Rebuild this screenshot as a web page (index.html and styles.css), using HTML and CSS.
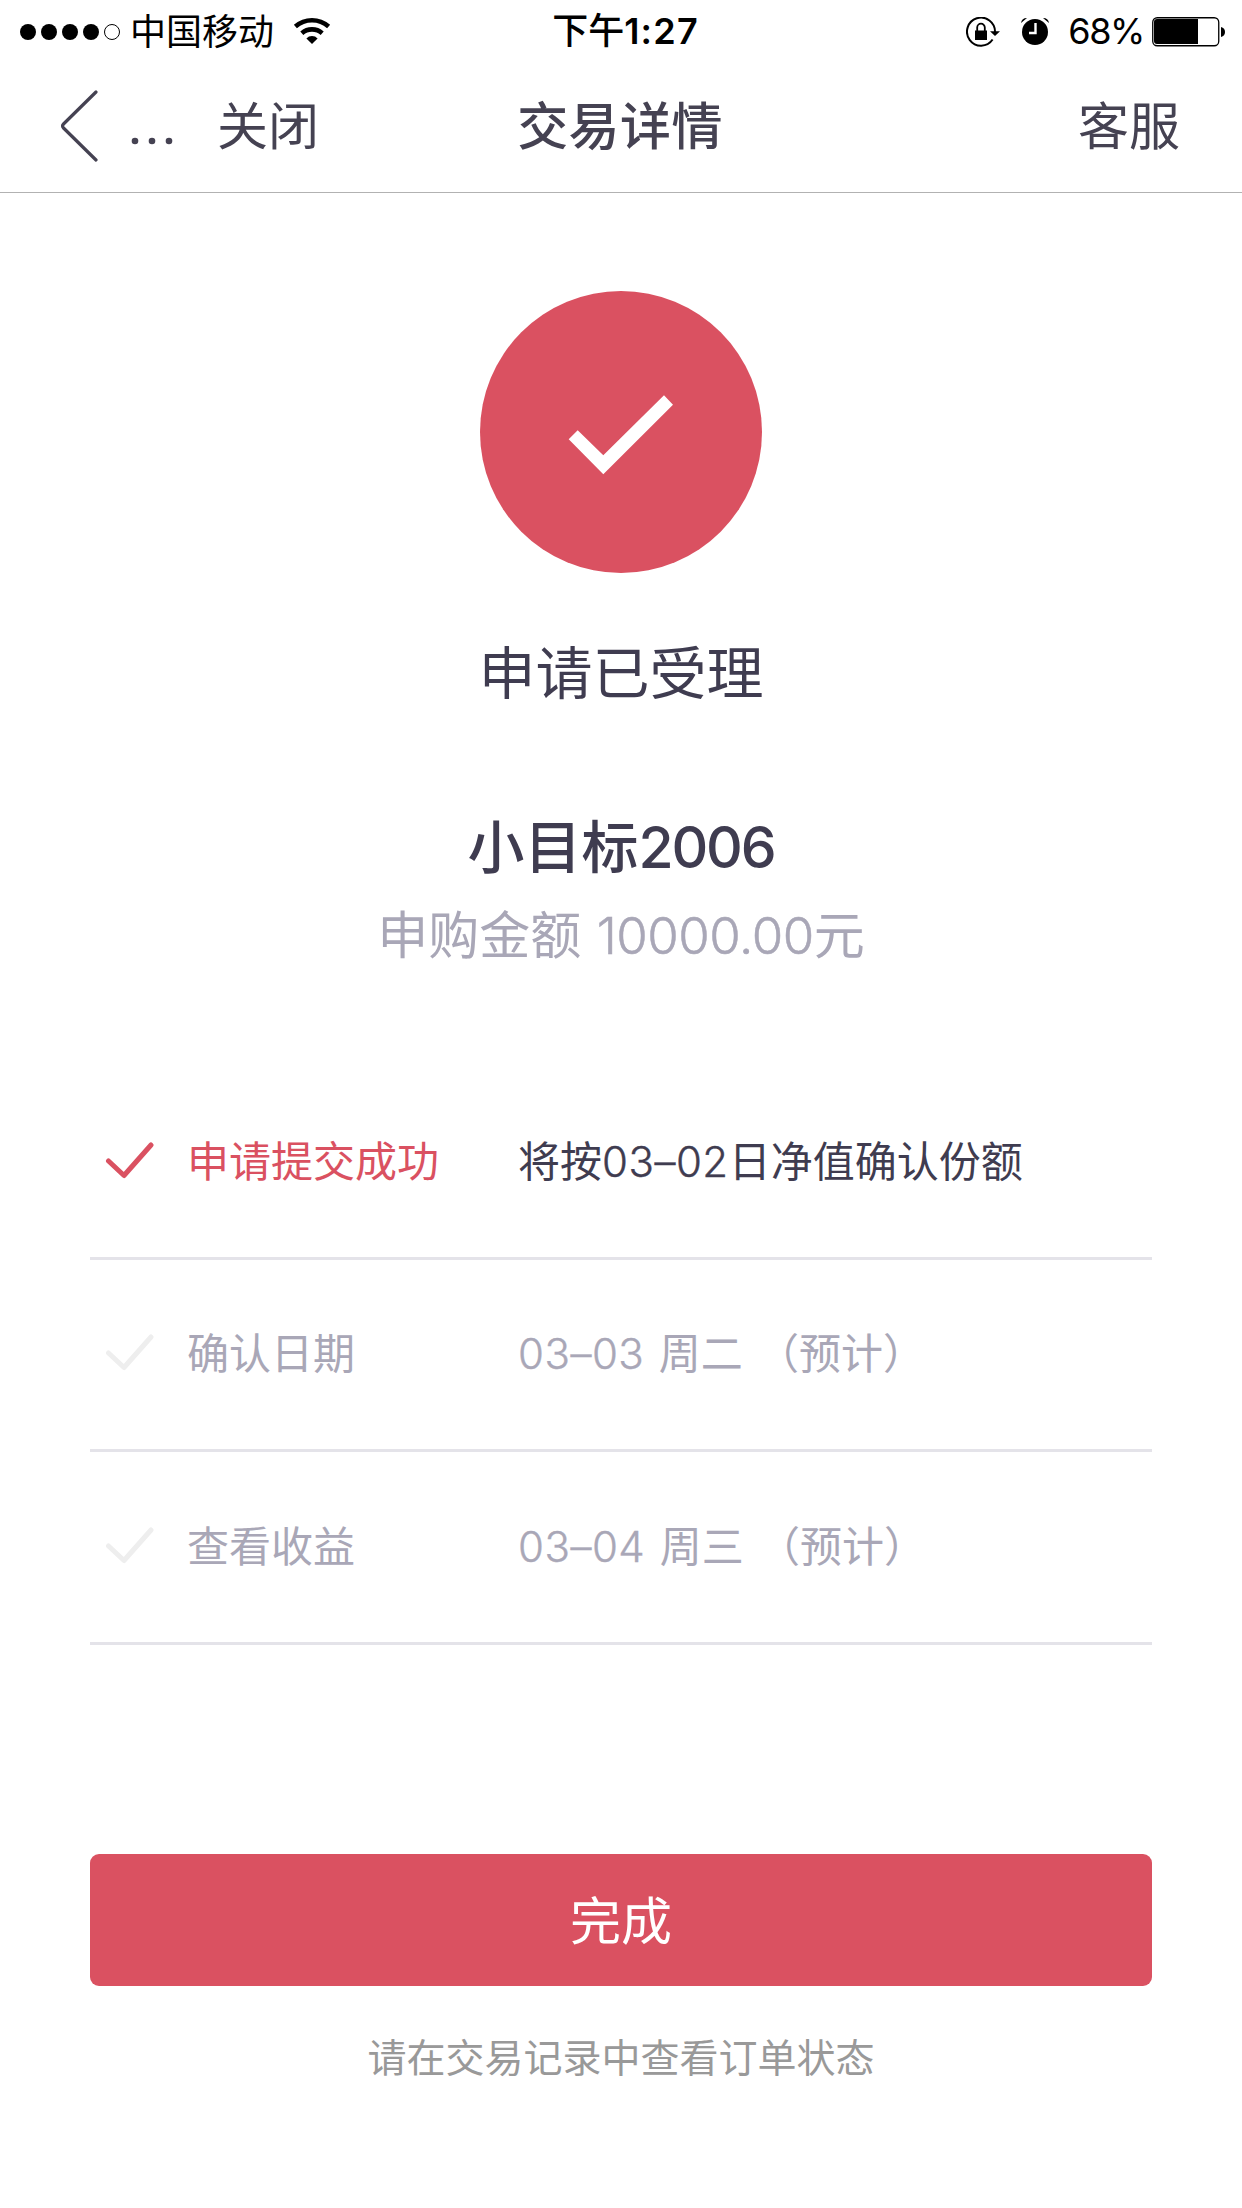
FILE: index.html
```html
<!DOCTYPE html>
<html lang="zh-CN">
<head>
<meta charset="utf-8">
<title>交易详情</title>
<link rel="stylesheet" href="styles.css">
</head>
<body>
<header class="status">
  <div class="status-left">
    <svg class="signal" width="100" height="18" viewBox="0 0 100 18">
      <circle cx="8" cy="9" r="8"/><circle cx="29" cy="9" r="8"/><circle cx="50" cy="9" r="8"/><circle cx="71" cy="9" r="8"/>
      <circle cx="92" cy="9" r="7.5" fill="none" stroke="#000" stroke-width="1"/>
    </svg>
    <span class="carrier">中国移动</span>
    <svg class="wifi" width="38" height="28" viewBox="0 0 38 28">
      <g fill="none" stroke="#000" stroke-width="4.600"><path d="M2.400 9.500a25 25 0 0 1 33.200 0"/><path d="M8.800 16.200a15.500 15.500 0 0 1 20.400 0"/></g>
      <path d="M19 27l-5.600-5.600a8 8 0 0 1 11.200 0z"/>
    </svg>
  </div>
  <div class="time">下午<span class="clock">1:27</span></div>
  <div class="status-right">
    <svg class="rotation" width="34" height="30" viewBox="0 0 34 30">
      <path d="M26.600 22.500A14 14 0 1 1 29 15" fill="none" stroke="#000" stroke-width="2"/>
      <path d="M24 14.200h10l-5 4.800z"/>
      <rect x="9" y="13.500" width="12" height="9.500"/>
      <path d="M11.200 14v-3.500a3.800 3.800 0 0 1 7.600 0V14" fill="none" stroke="#000" stroke-width="1.800"/>
    </svg>
    <svg class="alarm" width="28" height="28" viewBox="0 0 28 28">
      <circle cx="14" cy="15" r="13"/>
      <path d="M0 6a6 6 0 0 1 6-5zM28 6a6 6 0 0 0-6-5z"/>
      <path d="M14.500 6v10H8" fill="none" stroke="#fff" stroke-width="2.400"/>
    </svg>
    <span class="percent">68%</span>
    <svg class="battery" width="74" height="30" viewBox="0 0 74 30">
      <rect x=".75" y=".75" width="66" height="28" rx="4.500" fill="none" stroke="#000" stroke-width="1.300"/>
      <path d="M5 2h41v25H5a3 3 0 0 1-3-3V5a3 3 0 0 1 3-3z"/>
      <path d="M69 10q4 1 4 5t-4 5z"/>
    </svg>
  </div>
</header>
<nav class="nav">
  <div class="nav-left">
    <svg class="back" width="38" height="74" viewBox="0 0 38 74"><path d="M36 3L3.500 35q-2 2 0 4L36 71" fill="none" stroke="#454252" stroke-width="3.200" stroke-linecap="round"/></svg>
    <svg class="dots" width="42" height="8" viewBox="0 0 42 8"><circle cx="4" cy="4" r="3.300"/><circle cx="21" cy="4" r="3.300"/><circle cx="38" cy="4" r="3.300"/></svg>
    <span class="nav-text">关闭</span>
  </div>
  <h1 class="nav-title nav-text">交易详情</h1>
  <div class="nav-right nav-text">客服</div>
</nav>
<main class="content">
  <section class="result">
    <svg class="badge" width="282" height="282" viewBox="0 0 282 282">
      <circle cx="141" cy="141" r="141" fill="#da5161"/>
      <path d="M88.700 148.300l9-9 25.600 25 60.700-60 9 9.400-69.700 69.600z" fill="#fff"/>
    </svg>
    <p class="accepted">申请已受理</p>
    <h2 class="product">小目标<span class="product-num">2006</span></h2>
    <p class="amount">申购金额 <span class="amount-num">10000.00</span>元</p>
  </section>
  <ul class="steps">
    <li class="step done">
      <svg class="check" width="50" height="40" viewBox="0 0 50 40"><path d="M3.500 20L19 34.500 46 4"/></svg>
      <span class="label">申请提交成功</span><span class="value">将按<span class="date">03–02</span>日净值确认份额</span>
    </li>
    <li class="step">
      <svg class="check" width="50" height="40" viewBox="0 0 50 40"><path d="M3.500 20L19 34.500 46 4"/></svg>
      <span class="label">确认日期</span><span class="value"><span class="date">03–03</span> 周二 （预计）</span>
    </li>
    <li class="step">
      <svg class="check" width="50" height="40" viewBox="0 0 50 40"><path d="M3.500 20L19 34.500 46 4"/></svg>
      <span class="label">查看收益</span><span class="value"><span class="date">03–04</span> 周三 （预计）</span>
    </li>
  </ul>
  <button class="finish" type="button">完成</button>
  <p class="note">请在交易记录中查看订单状态</p>
</main>
</body>
</html>
```
FILE: styles.css
```css
* { box-sizing: border-box; margin: 0; padding: 0; }
body {
  width: 1242px;
  min-height: 2208px;
  background: #fff;
  color: #3f3c50;
  font-family: "Noto Sans CJK SC", sans-serif;
  font-weight: 400;
  white-space: nowrap;
}
svg { display: block; flex: none; }

.status, .nav { display: grid; grid-template-columns: 1fr auto 1fr; align-items: center; }
.status { height: 60px; padding: 0 16px 0 20px; color: #000; font-size: 36px; line-height: 60px; }
.status-left, .status-right { display: flex; align-items: center; height: 60px; }
.status-right { justify-content: flex-end; }
.carrier { margin-left: 10px; padding-bottom: 5px; line-height: 55px; }
.wifi { margin: -2px 0 0 19px; }
.time { font-weight: 500; padding: 0 0 4px 5px; line-height: 56px; }
.clock { font-family: Inter, sans-serif; font-weight: 600; letter-spacing: 1.2px; }
.rotation { margin-right: 1px; }
.alarm { margin: -2px 0 0 20px; }
.percent { font-family: Inter, sans-serif; font-weight: 400; letter-spacing: -1.4px; line-height: 58px; margin: 0 8px 2px 19px; }

.nav { height: 133px; padding: 0 62px 0 60px; border-bottom: 1px solid #b2b2b2; color: #454252; font-size: 51px; }
.nav-text { padding-bottom: 6px; line-height: 126px; }
.nav-left { display: flex; align-items: center; }
.dots { margin: 29px 44px 0 33px; fill: #454252; }
.nav-title { font-size: 51px; font-weight: 500; letter-spacing: .4px; }
.nav-right { text-align: right; }

.content { padding: 98px 90px 0; }
.result { display: flex; flex-direction: column; align-items: center; }
.accepted { margin-top: 56px; font-size: 57px; line-height: 80px; }
.product { margin-top: 94px; font-size: 57px; font-weight: 500; line-height: 80px; }
.product-num { font-family: Inter, sans-serif; font-weight: 550; letter-spacing: -2.2px; }
.amount { margin-top: 4px; font-size: 51px; line-height: 80px; color: #a9a7b7; word-spacing: 4px; }
.amount-num { font-family: Inter, sans-serif; font-weight: 300; letter-spacing: -.5px; -webkit-text-stroke: .5px currentColor; }

.steps { list-style: none; margin-top: 91px; }
.step { display: flex; align-items: center; height: 192.5px; border-bottom: 3px solid #e4e3e9; color: #a9a7b7; font-size: 42px; line-height: 60px; }
.check { margin: -2px 0 0 15px; fill: none; stroke: #eee; stroke-width: 5; stroke-linecap: round; stroke-linejoin: round; }
.label { width: 331px; margin-left: 32px; }
.label, .value { height: 60px; line-height: 54px; }
.value { word-spacing: 5px; }
.date { font-family: Inter, sans-serif; font-weight: 300; letter-spacing: .5px; -webkit-text-stroke: .4px currentColor; }
.done { color: #3f3c50; }
.done .check { stroke: #da5161; }
.done .label { color: #da5161; }

.finish { display: block; width: 100%; height: 132px; margin-top: 209px; border: 0; border-radius: 9px; background: #da5161; color: #fff; font: 400 51px/128px "Noto Sans CJK SC", sans-serif; padding-bottom: 4px; }
.note { margin-top: 39px; color: #999; font-size: 39px; line-height: 60px; text-align: center; }
```
